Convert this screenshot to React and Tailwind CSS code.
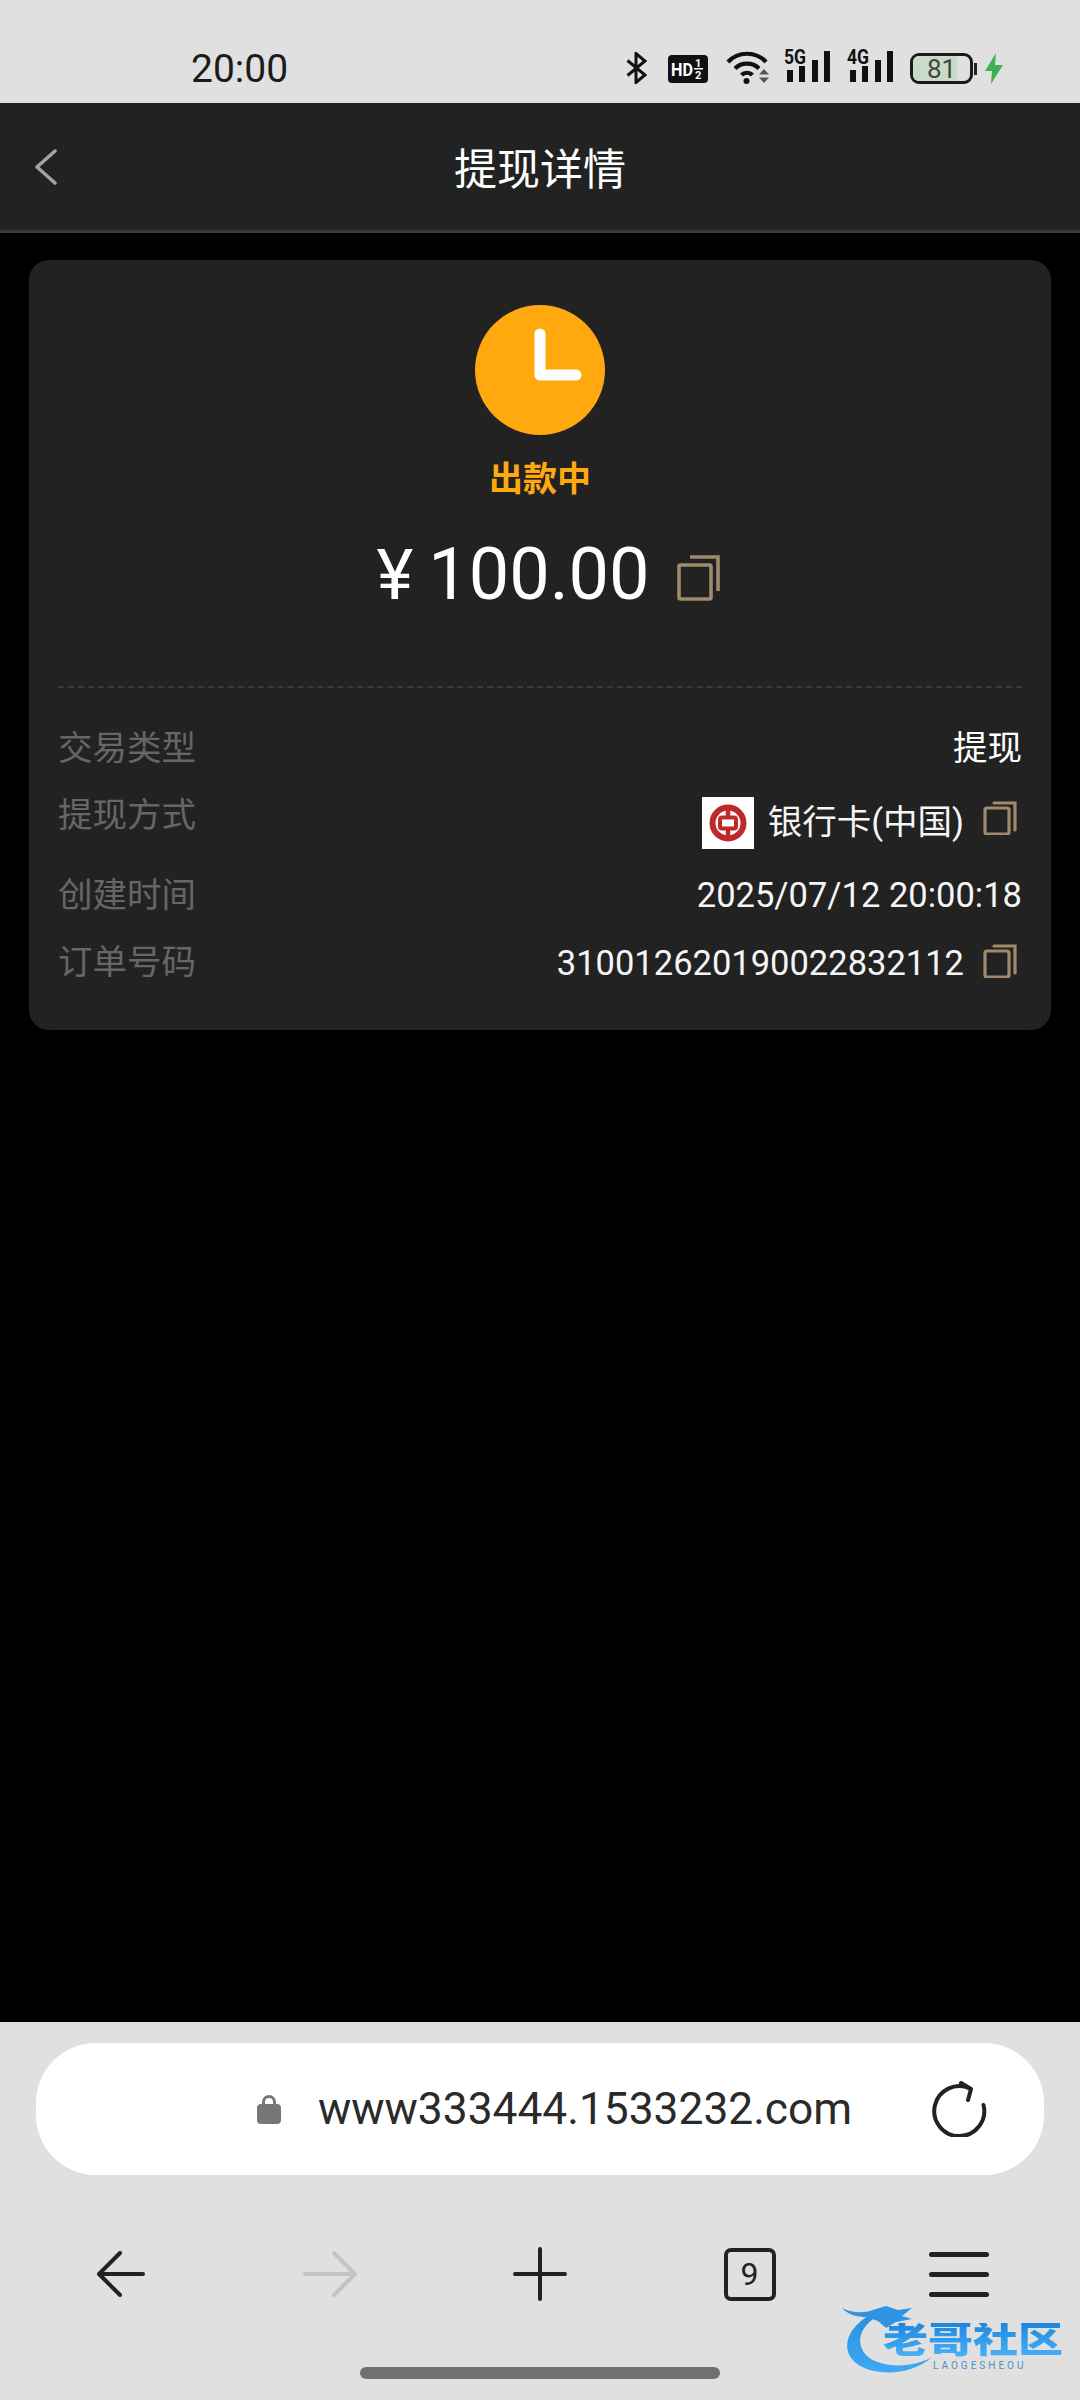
const FONT = { fontFamily: 'Roboto, "Noto Sans CJK SC", sans-serif' };

const CopyIcon = ({ big }) =>
  big ? (
    <svg width="44" height="46" viewBox="0 0 44 46" fill="none" stroke="#a08a6c" strokeWidth="3.6">
      <rect x="2" y="10" width="32" height="34" rx="1.5" />
      <path d="M13 2h28v34" />
    </svg>
  ) : (
    <svg width="34" height="34" viewBox="0 0 34 34" fill="none" stroke="#a08a6c" strokeWidth="3.2">
      <rect x="2" y="7" width="24" height="26" rx="2" />
      <path d="M11 2h21v27" strokeLinecap="round" />
    </svg>
  );

const Signal = ({ label }) => (
  <svg width="46" height="37" viewBox="0 -6 46 37">
    <text x="0" y="13" fontFamily="Roboto" fontWeight="700" fontSize="20" textLength="22" lengthAdjust="spacingAndGlyphs" fill="#111">
      {label}
    </text>
    <rect x="3" y="19" width="6" height="12" fill="#111" />
    <rect x="15" y="15" width="6" height="16" fill="#111" />
    <rect x="28" y="9" width="6" height="22" fill="#111" />
    <rect x="40" y="0" width="6" height="31" fill="#111" />
  </svg>
);

const StatusBar = () => (
  <div className="h-[103px] bg-[#e0e0e0] flex justify-between items-start pt-[49px] pl-[191px] pr-[77px]">
    <span className="text-[39px] leading-[40px] text-[#1b1b1b]">20:00</span>
    <div className="flex items-start">
      <svg className="mt-[3px]" width="21" height="32" viewBox="0 0 21 32" fill="none" stroke="#111" strokeWidth="3">
        <path d="M1.5 8.5 19 23 10 30.5V1.5L19 9 1.5 23.5" />
      </svg>
      <div className="ml-[21px] mt-[6px] w-[40px] h-[28px] bg-[#111] rounded-[4px] flex items-center justify-center">
        <svg width="36" height="26" viewBox="0 0 36 26" className="overflow-visible">
          <text x="1" y="20" fontFamily="Roboto" fontWeight="700" fontSize="18" textLength="22" lengthAdjust="spacingAndGlyphs" fill="#fff">HD</text>
          <text x="25" y="11" fontFamily="Roboto" fontWeight="700" fontSize="11" fill="#fff">1</text>
          <rect x="24" y="12" width="9" height="1.5" fill="#fff" />
          <text x="25" y="23" fontFamily="Roboto" fontWeight="700" fontSize="11" fill="#fff">2</text>
        </svg>
      </div>
      <svg className="ml-[18px] mt-[1px]" width="44" height="34" viewBox="0 0 44 34" fill="none" stroke="#111" strokeWidth="4.2">
        <path d="M2 12C12 1 30 1 40 12" />
        <path d="M9 18.5C15.5 12 26.5 12 33 18.5" />
        <path d="M15.5 25C18.5 22 23.5 22 26.5 25" />
        <circle cx="20.5" cy="31" r="3" fill="#111" stroke="none" />
        <path d="M33 24.5l5-5.5 5 5.500z" fill="#555" stroke="none" />
        <path d="M33 27.500h10l-5 5.500z" fill="#555" stroke="none" />
      </svg>
      <div className="ml-[14px] mt-[-4px]"><Signal label="5G" /></div>
      <div className="ml-[17px] mt-[-4px]"><Signal label="4G" /></div>
      <div className="ml-[17px] mt-[4px] flex items-center">
        <div className="relative w-[63px] h-[31px] rounded-[9px] border-[3px] border-[#1a1a1a] overflow-hidden">
          <div className="h-full w-[44px] bg-[#c9dcc9]" />
          <span className="absolute inset-0 flex items-center justify-center text-[26px] leading-none text-[#444]">81</span>
        </div>
        <div className="ml-[1px] w-[3px] h-[12px] bg-[#222]" />
      </div>
      <svg className="ml-[8px] mt-[4px]" width="18" height="31" viewBox="0 0 18 31">
        <path d="M11 0 0 18h7l-1 13L18 12h-8z" fill="#3bb152" />
      </svg>
    </div>
  </div>
);

const Header = () => (
  <div className="h-[130px] bg-[#222222] border-b-[3px] border-[#3a3a3a] grid grid-cols-[1fr_auto_1fr] items-center">
    <svg className="ml-[34px]" width="24" height="36" viewBox="0 0 24 36" fill="none" stroke="#a3a3a3" strokeWidth="3.5" strokeLinecap="round" strokeLinejoin="round">
      <path d="M21 2 3 18l18 16" />
    </svg>
    <span className="pt-[6px] text-[43px] leading-[60px] text-white">提现详情</span>
    <div />
  </div>
);

const BankLogo = () => (
  <div className="mt-[4px] w-[52px] h-[52px] bg-white flex items-center justify-center">
    <svg width="38" height="38" viewBox="0 0 38 38" fill="none" stroke="#c0282a">
      <circle cx="19" cy="19" r="15.5" strokeWidth="6" />
      <rect x="11" y="13.500" width="16" height="11" rx="2" strokeWidth="4" />
      <path d="M19 2v11M19 25v11" strokeWidth="4.500" />
    </svg>
  </div>
);

const Row = ({ label, children, className = '' }) => (
  <div className={`flex justify-between items-start ${className}`}>
    <span className="text-[34.5px] leading-[44px] text-[#666666]">{label}</span>
    {children}
  </div>
);

const DetailCard = () => (
  <div className="mx-[29px] mt-[27px] bg-[#222222] rounded-[20px] px-[29px] pt-[45px] pb-[45px]">
    <div className="flex flex-col items-center">
      <div className="w-[130px] h-[130px] rounded-full bg-[#ffa90f] flex items-center justify-center">
        <svg width="130" height="130" viewBox="0 0 130 130" fill="none" stroke="#fff" strokeWidth="11" strokeLinecap="round" strokeLinejoin="round">
          <path d="M65 29v41h36" />
        </svg>
      </div>
      <span className="mt-[24px] text-[34px] leading-[40px] font-bold text-[#ffa90f]">出款中</span>
      <div className="mt-[31px] ml-[17px] flex items-center h-[90px] text-white">
        <span className="text-[70px] leading-none">¥</span>
        <span className="ml-[15px] text-[72px] leading-none">100.00</span>
        <span className="ml-[27px] mt-[6px]"><CopyIcon big /></span>
      </div>
    </div>
    <div className="mt-[66px] border-t-2 border-dashed border-[#3a3a3a]" />
    <div className="mt-[38px] flex flex-col gap-[23px]">
      <Row label="交易类型">
        <span className="text-[34.5px] leading-[44px] text-white">提现</span>
      </Row>
      <Row label="提现方式" className="h-[57px]">
        <div className="flex items-start pr-[5px]">
          <BankLogo />
          <span className="ml-[14px] mt-[7px] text-[34.5px] leading-[44px] text-[#f5f5f5]">银行卡(中国)</span>
          <span className="ml-[19px] mt-[8px]"><CopyIcon /></span>
        </div>
      </Row>
      <Row label="创建时间">
        <span className="text-[34.5px] leading-[44px] text-[#f5f5f5]">2025/07/12 20:00:18</span>
      </Row>
      <Row label="订单号码">
        <div className="flex items-start pr-[5px]">
          <span className="mt-[1px] text-[34.5px] leading-[44px] text-[#f5f5f5]">310012620190022832112</span>
          <span className="ml-[19px] mt-[4px]"><CopyIcon /></span>
        </div>
      </Row>
    </div>
  </div>
);

const Watermark = () => (
  <div className="absolute left-[840px] top-[283px] w-[230px] h-[75px]">
    <svg className="absolute inset-0" width="230" height="75" viewBox="0 0 230 75">
      <defs>
        <linearGradient id="swoosh" x1="0" y1="0" x2="0" y2="1">
          <stop offset="0" stopColor="#2a8fe0" />
          <stop offset="1" stopColor="#3fa9f5" />
        </linearGradient>
      </defs>
      <path d="M30 10C8 22 -1 44 16 58c16 13 54 14 76 -6C74 63 40 64 26 50 15 38 20 22 36 12z" fill="url(#swoosh)" />
      <path d="M2 3c12 6 24 5 34 1l10 -3 12 4 14 -2 -10 8 10 3 -16 3 -10 6 -8 -7 -12 -4C18 12 8 10 2 3z" fill="#2f93e2" />
    </svg>
    <span className="absolute left-[43px] top-[18px] text-[36px] leading-[36px] font-black whitespace-nowrap origin-left scale-x-[1.25] bg-gradient-to-b from-[#1c86e0] to-[#49b4f8] bg-clip-text text-transparent">
      老哥社区
    </span>
    <span className="absolute left-[93px] top-[55px] text-[10px] leading-[12px] tracking-[3px] text-[#4a90c8]">LAOGESHEOU</span>
  </div>
);

const BottomBar = () => (
  <div className="relative h-[378px] bg-[#e0e0e0] pt-[21px]">
    <div className="mx-[36px] h-[132px] bg-white rounded-[60px] flex items-center pl-[221px] pr-[57px]">
      <svg width="24" height="30" viewBox="0 0 24 30">
        <path d="M6.500 12V8a5.500 5.500 0 0 1 11 0v4" fill="none" stroke="#777" strokeWidth="3" />
        <rect x="0" y="10" width="24" height="20" rx="4" fill="#777" />
      </svg>
      <span className="ml-[37px] flex-1 text-[44.3px] leading-[56px] text-[#2a2a2a]">www333444.1533232.com</span>
      <svg width="56" height="56" viewBox="0 0 56 56" fill="none" stroke="#222" strokeWidth="4" strokeLinecap="round" strokeLinejoin="round">
        <path d="M39 7.500A25 25 0 1 0 52.500 24" />
        <path d="M30 2l10 6-3 11" strokeWidth="4" />
      </svg>
    </div>
    <div className="mt-[71px] px-[16px] grid grid-cols-5 items-center justify-items-center h-[56px]">
      <svg width="50" height="46" viewBox="0 0 50 46" fill="none" stroke="#222" strokeWidth="4" strokeLinecap="round" strokeLinejoin="round">
        <path d="M24 2 3 23l21 21M3 23h44" />
      </svg>
      <svg width="56" height="46" viewBox="0 0 56 46" fill="none" stroke="#c4c4c4" strokeWidth="4" strokeLinecap="round" strokeLinejoin="round">
        <path d="M32 2l21 21-21 21M3 23h50" />
      </svg>
      <svg width="54" height="54" viewBox="0 0 54 54" fill="none" stroke="#222" strokeWidth="4" strokeLinecap="round">
        <path d="M2 27h50M27 2v50" />
      </svg>
      <div className="w-[52px] h-[53px] border-[4px] border-[#222] rounded-[7px] flex items-center justify-center text-[32px] leading-none text-[#222]">9</div>
      <div className="w-[60px] h-[45px] flex flex-col justify-between">
        <div className="h-[5px] rounded-full bg-[#222]" />
        <div className="h-[5px] rounded-full bg-[#222]" />
        <div className="h-[5px] rounded-full bg-[#222]" />
      </div>
    </div>
    <Watermark />
    <div className="absolute left-[360px] top-[345px] w-[360px] h-[12px] rounded-full bg-[#707070]" />
  </div>
);

export default function App() {
  return (
    <div className="w-[1080px] h-[2400px] bg-black flex flex-col overflow-hidden" style={FONT}>
      <StatusBar />
      <Header />
      <div className="flex-1">
        <DetailCard />
      </div>
      <BottomBar />
    </div>
  );
}
